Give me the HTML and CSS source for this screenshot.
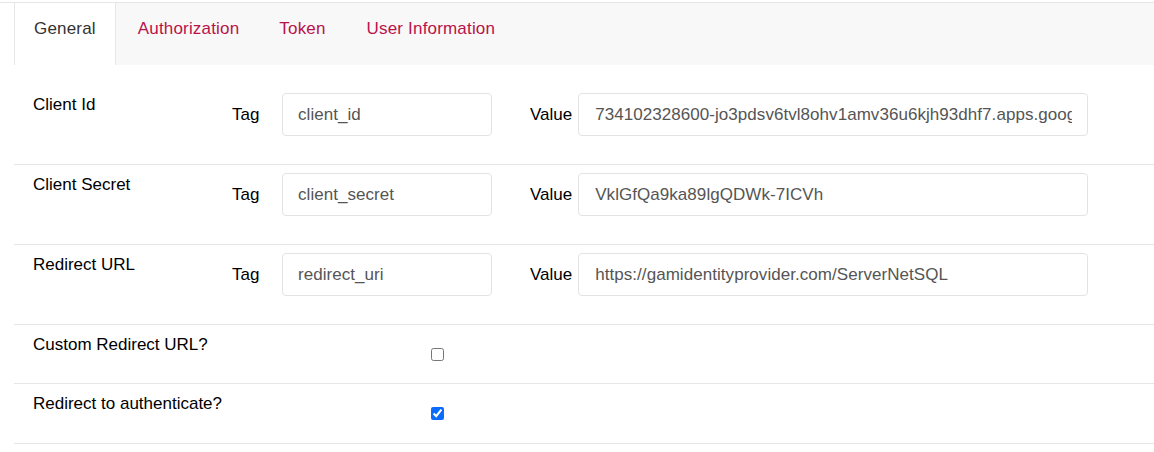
FILE: index.html
```html
<!DOCTYPE html>
<html>
<head>
<meta charset="utf-8">
<link rel="stylesheet" href="styles.css">
</head>
<body>
<div class="topline"></div>
<div class="panel">
  <ul class="tabs">
    <li class="tab active">General</li>
    <li class="tab">Authorization</li>
    <li class="tab">Token</li>
    <li class="tab">User Information</li>
  </ul>
  <div class="content">
    <div class="row first">
      <div class="label">Client Id</div>
      <span class="tag-label">Tag</span>
      <input class="field tag-field" type="text" value="client_id">
      <span class="value-label">Value</span>
      <input class="field value-field" type="text" value="734102328600-jo3pdsv6tvl8ohv1amv36u6kjh93dhf7.apps.googleusercontent.com">
    </div>
    <div class="row">
      <div class="label">Client Secret</div>
      <span class="tag-label">Tag</span>
      <input class="field tag-field" type="text" value="client_secret">
      <span class="value-label">Value</span>
      <input class="field value-field" type="text" value="VklGfQa9ka89lgQDWk-7ICVh">
    </div>
    <div class="row">
      <div class="label">Redirect URL</div>
      <span class="tag-label">Tag</span>
      <input class="field tag-field" type="text" value="redirect_uri">
      <span class="value-label">Value</span>
      <input class="field value-field" type="text" value="https://gamidentityprovider.com/ServerNetSQL">
    </div>
    <div class="row check-row">
      <div class="label">Custom Redirect URL?</div>
      <input class="check" type="checkbox">
    </div>
    <div class="row check-row last">
      <div class="label">Redirect to authenticate?</div>
      <input class="check" type="checkbox" checked>
    </div>
  </div>
</div>
</body>
</html>
```

FILE: styles.css
```css
html, body {
  margin: 0;
  padding: 0;
  background: #fff;
  font-family: "Liberation Sans", Arial, sans-serif;
  color: #000;
}
.topline {
  height: 2px;
  background: #fff;
  border-bottom: 1px solid #e6e6e6;
}
.panel {
  margin-left: 14px;
}
.tabs {
  list-style: none;
  margin: 0;
  padding: 0;
  display: flex;
  height: 62px;
  background: #f8f8f8;
}
.tab {
  padding: 14px 20px 0 21px;
  font-size: 17px;
  line-height: 24px;
  letter-spacing: 0.18px;
  color: #b8124a;
}
.tab.active {
  background: #fff;
  color: #333;
  border-left: 1px solid #e6e6e6;
  border-right: 1px solid #e6e6e6;
  padding-left: 19px;
  padding-right: 19px;
}
.tab.active + .tab {
  padding-left: 22px;
  padding-right: 19px;
}
.content {
  padding-top: 19px;
}
.row {
  display: flex;
  align-items: flex-start;
  padding: 8px 0 28px 19px;
  border-bottom: 1px solid #e6e6e6;
}
.row.first {
  padding-top: 9px;
  padding-bottom: 28px;
}
.label {
  width: 199px;
  flex: none;
  font-size: 17px;
  line-height: 24px;
  margin-top: 0;
}
.tag-label, .value-label {
  font-size: 17px;
  line-height: 42px;
  margin-top: 1px;
}
.tag-label {
  width: 27px;
  margin-right: 23px;
}
.value-label {
  margin-left: 38px;
  margin-right: 6px;
}
.field {
  box-sizing: border-box;
  height: 43px;
  border: 1px solid #e3e3e3;
  border-radius: 4px;
  padding: 0 15px;
  font-family: "Liberation Sans", Arial, sans-serif;
  font-size: 17px;
  letter-spacing: 0.05px;
  color: #555;
  outline: none;
  margin: 0;
}
.tag-field { width: 210px; }
.value-field { width: 510px; padding-left: 16px; }
.check-row {
  padding-top: 8px;
  padding-bottom: 0;
  height: 50px;
}
.check-row.last {
  height: 51px;
}
.check {
  margin: 15px 0 0 199px;
  width: 13px;
  height: 13px;
  accent-color: #0a6cff;
}
```
